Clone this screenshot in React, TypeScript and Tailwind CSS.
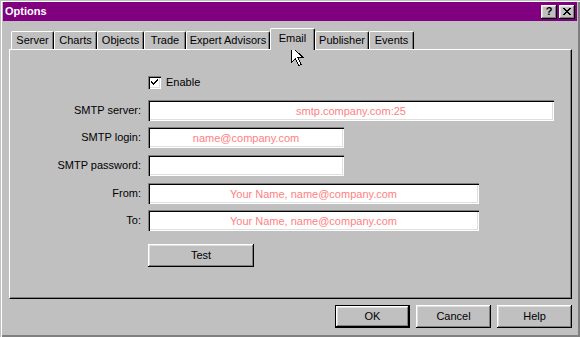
import React from "react";

const raised =
  "shadow-[inset_-1px_-1px_0_#000,inset_1px_1px_0_#fff,inset_-2px_-2px_0_#808080,inset_2px_2px_0_#dfdfdf]";
const sunken =
  "shadow-[inset_1px_1px_0_#808080,inset_2px_2px_0_#000,inset_-1px_-1px_0_#fff,inset_-2px_-2px_0_#dfdfdf]";

const tabs = [
  { name: "Server", w: "w-[43px]" },
  { name: "Charts", w: "w-[43px]" },
  { name: "Objects", w: "w-[47px]" },
  { name: "Trade", w: "w-[42px]" },
  { name: "Expert Advisors", w: "w-[84px]" },
  { name: "Email", w: "w-[45px]", active: true },
  { name: "Publisher", w: "w-[54px]" },
  { name: "Events", w: "w-[45px]" },
];

function Tab({ name, w, active }: { name: string; w: string; active?: boolean }) {
  if (active) {
    return (
      <div
        className={`${w} relative z-10 -mb-px h-[22px] flex items-center justify-center pb-[3px] bg-[#c0c0c0] border-l border-t border-white rounded-tl-[2px] rounded-tr-[2px] border-r border-r-black shadow-[inset_-1px_0_0_#808080]`}
      >
        {name}
      </div>
    );
  }
  return (
    <div
      className={`${w} h-[18px] flex items-center justify-center border-l border-t border-white rounded-tl-[2px] rounded-tr-[2px] border-r border-r-black shadow-[inset_-1px_0_0_#808080]`}
    >
      {name}
    </div>
  );
}

function Field({
  label,
  w,
  value,
  mt,
}: {
  label: string;
  w: string;
  value?: string;
  mt: string;
}) {
  return (
    <div className={`flex items-center h-[21px] ${mt}`}>
      <div className="w-[131px] text-right">{label}</div>
      <div
        className={`${w} ${sunken} ml-[7px] h-[21px] bg-white flex items-center justify-center text-[#ff8080] pt-px`}
      >
        {value}
      </div>
    </div>
  );
}

function Cursor() {
  return (
    <svg
      className="absolute left-[290px] top-[45px]"
      width="14"
      height="23"
      viewBox="0 0 14 23"
    >
      <path
        d="M1.5 1.5 L1.5 17.5 L5.5 13.5 L8.5 20.5 L11 19.5 L8 12.5 L13 12.5 Z"
        fill="#fff"
        stroke="#000"
        strokeWidth="1"
        shapeRendering="crispEdges"
      />
    </svg>
  );
}

export default function App() {
  return (
    <div className="w-[580px] h-[337px] bg-[#c0c0c0] relative overflow-hidden font-['Liberation_Sans',Arial,sans-serif] text-[11px] text-black shadow-[inset_1px_1px_0_#c0c0c0,inset_2px_2px_0_#fff,inset_-2px_-2px_0_#808080] pt-[2px] px-[3px]">
      {/* title bar */}
      <div className="h-[19px] bg-[#800080] flex items-center justify-between pl-[2px] pr-[2px]">
        <span className="text-white font-bold text-[11px]">Options</span>
        <div className="flex gap-[2px]">
          <div
            className={`${raised} w-[16px] h-[14px] bg-[#c0c0c0] flex items-center justify-center font-bold text-[11px] leading-none`}
          >
            ?
          </div>
          <div
            className={`${raised} w-[16px] h-[14px] bg-[#c0c0c0] flex items-center justify-center`}
          >
            <svg width="8" height="7" viewBox="0 0 8 7" shapeRendering="crispEdges">
              <path d="M0 0h2v1h-2zM6 0h2v1h-2zM1 1h2v1h-2zM5 1h2v1h-2zM2 2h4v1h-4zM3 3h2v1h-2zM2 4h4v1h-4zM1 5h2v1h-2zM5 5h2v1h-2zM0 6h2v1h-2zM6 6h2v1h-2z" fill="#000" />
            </svg>
          </div>
        </div>
      </div>

      <div className="pl-[6px]">
        {/* tabs */}
        <div className="mt-[7px] ml-[2px] h-[21px] flex items-end">
          {tabs.map((t) => (
            <Tab key={t.name} name={t.name} w={t.w} active={t.active} />
          ))}
        </div>

        {/* panel */}
        <div className="w-[563px] h-[250px] border-l border-t border-white border-r border-b border-r-black border-b-black shadow-[inset_-1px_-1px_0_#808080] flex flex-col">
          <div className="flex items-center h-[13px] mt-[26px] ml-[138px]">
            <div
              className={`${sunken} w-[13px] h-[13px] bg-white flex items-center justify-center`}
            >
              <svg width="7" height="7" viewBox="0 0 7 7" shapeRendering="crispEdges">
                <path d="M6 0h1v1h-1zM5 1h2v1h-2zM4 2h2v1h-2zM0 2h1v1h-1zM0 3h2v1h-2zM3 3h2v1h-2zM1 4h3v1h-3zM2 5h1v1h-1z" fill="#000" />
              </svg>
            </div>
            <span className="ml-[5px]">Enable</span>
          </div>

          <Field label="SMTP server:" w="w-[406px]" value="smtp.company.com:25" mt="mt-[11px]" />
          <Field label="SMTP login:" w="w-[196px]" value="name@company.com" mt="mt-[6px]" />
          <Field label="SMTP password:" w="w-[196px]" mt="mt-[7px]" />
          <Field label="From:" w="w-[331px]" value="Your Name, name@company.com" mt="mt-[7px]" />
          <Field label="To:" w="w-[331px]" value="Your Name, name@company.com" mt="mt-[6px]" />

          <div className="ml-[138px] mt-[13px]">
            <div className={`${raised} w-[106px] h-[23px] flex items-center justify-center`}>
              Test
            </div>
          </div>
        </div>

        {/* dialog buttons */}
        <div className="w-[563px] mt-[6px] flex justify-end gap-[6px]">
          <div className="w-[75px] h-[23px] border border-black">
            <div className={`${raised} w-full h-full flex items-center justify-center`}>OK</div>
          </div>
          <div className={`${raised} w-[75px] h-[23px] flex items-center justify-center`}>
            Cancel
          </div>
          <div className={`${raised} w-[75px] h-[23px] flex items-center justify-center`}>
            Help
          </div>
        </div>
      </div>

      <Cursor />
    </div>
  );
}
